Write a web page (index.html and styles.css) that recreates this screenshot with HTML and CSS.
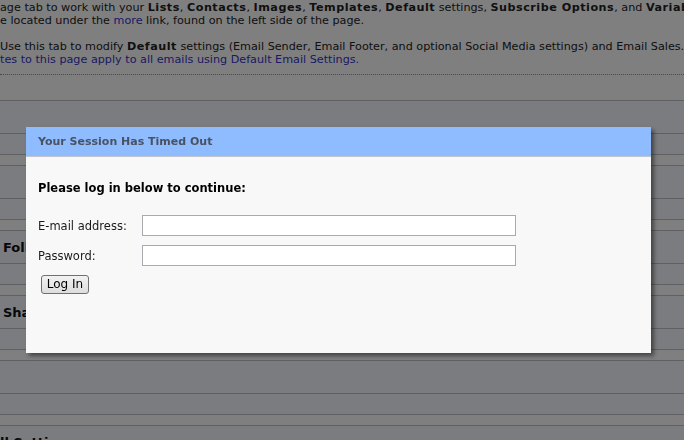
FILE: index.html
```html
<!DOCTYPE html>
<html>
<head>
<meta charset="utf-8">
<link rel="stylesheet" href="styles.css">
</head>
<body>
<div class="page">
  <div class="intro">
    <div class="line">age tab to work with your <b>Lists</b>, <b>Contacts</b>, <b>Images</b>, <b>Templates</b>, <b>Default</b> settings, <b>Subscribe Options</b>, and <b>Variables</b>.</div>
    <div class="line">e located under the <a class="lnk">more</a> link, found on the left side of the page.</div>
    <div class="line blank">&nbsp;</div>
    <div class="line">Use this tab to modify <b>Default</b> settings (Email Sender, Email Footer, and optional Social Media settings) and Email Sales.</div>
    <div class="line lnk">tes to this page apply to all emails using Default Email Settings.</div>
  </div>
  <div class="rule"></div>
  <div class="sections">
    <div class="section"><div class="row head"></div><div class="row"></div></div>
    <div class="section"><div class="row head"></div><div class="row"></div></div>
    <div class="section"><div class="row head"><span class="label">Follow Us</span></div><div class="row"></div></div>
    <div class="section"><div class="row head"><span class="label">Share</span></div><div class="row"></div></div>
    <div class="section"><div class="row head"></div><div class="row"></div></div>
    <div class="section"><div class="row head"><span class="label flush">ll Settings</span></div><div class="row"></div></div>
  </div>
</div>
<div class="overlay"></div>
<div class="dialog">
  <div class="dlg-head">Your Session Has Timed Out</div>
  <div class="dlg-body">
    <div class="prompt">Please log in below to continue:</div>
    <div class="field">
      <label class="flabel">E-mail address:</label>
      <div class="input"></div>
    </div>
    <div class="field">
      <label class="flabel">Password:</label>
      <div class="input"></div>
    </div>
    <div class="btn">Log In</div>
  </div>
</div>
</body>
</html>
```

FILE: styles.css
```css
html, body {
  margin: 0;
  padding: 0;
  background: #ffffff;
  overflow: hidden;
  width: 684px;
  height: 440px;
}
body {
  font-family: "DejaVu Sans", Verdana, sans-serif;
  color: #222222;
}
.page {
  width: 684px;
}
.intro {
  padding-top: 1px;
  font-size: 11.2px;
  line-height: 13px;
  white-space: nowrap;
  overflow: hidden;
}
.intro b {
  letter-spacing: 0.5px;
}
.line {
  height: 13px;
}
.lnk {
  color: #3535c8;
}
.rule {
  margin-top: 8px;
  border-top: 1px dotted #8a9a7a;
  height: 25px;
}
.section {
  border-top: 1px solid #bfc0c8;
  margin-bottom: 10px;
}
.row {
  background: #f6f8ff;
  height: 20px;
  border-bottom: 1px solid #bfc0c8;
}
.row.head {
  height: 32px;
  display: flex;
  align-items: center;
}
.label {
  font-weight: bold;
  font-size: 13px;
  padding-left: 3px;
  color: #111111;
  white-space: nowrap;
}
.label.flush {
  padding-left: 0;
}
.overlay {
  position: fixed;
  left: 0;
  top: 0;
  right: 0;
  bottom: 0;
  background: rgba(0, 0, 0, 0.5);
}
.dialog {
  position: absolute;
  left: 26px;
  top: 127px;
  width: 625px;
  height: 226px;
  background: #f8f8f9;
  box-shadow: 3px 3px 4px rgba(0, 0, 0, 0.45);
  display: flex;
  flex-direction: column;
}
.dlg-head {
  height: 29px;
  flex: none;
  background: #8fbcff;
  border-bottom: 1px solid #c0c4cc;
  padding-left: 12px;
  display: flex;
  align-items: center;
  font-size: 11px;
  font-weight: bold;
  color: #4a5262;
}
.dlg-body {
  padding: 24px 12px 0 12px;
  font-size: 11.5px;
}
.prompt {
  font-weight: bold;
  color: #000000;
  height: 14px;
  margin-bottom: 20px;
}
.field {
  display: flex;
  align-items: center;
  height: 21px;
  margin-bottom: 9px;
}
.flabel {
  width: 104px;
  color: #1a1a1a;
}
.input {
  width: 372px;
  height: 19px;
  border: 1px solid #a9a9b0;
  background: #ffffff;
}
.btn {
  margin-left: 3px;
  margin-top: 1px;
  width: 46px;
  height: 17px;
  border: 1px solid #707070;
  border-radius: 3px;
  background: linear-gradient(#f2f2f2, #dddddd);
  font-family: "DejaVu Sans", Tahoma, sans-serif;
  font-size: 12px;
  line-height: 17px;
  text-align: center;
  color: #000;
}
```
